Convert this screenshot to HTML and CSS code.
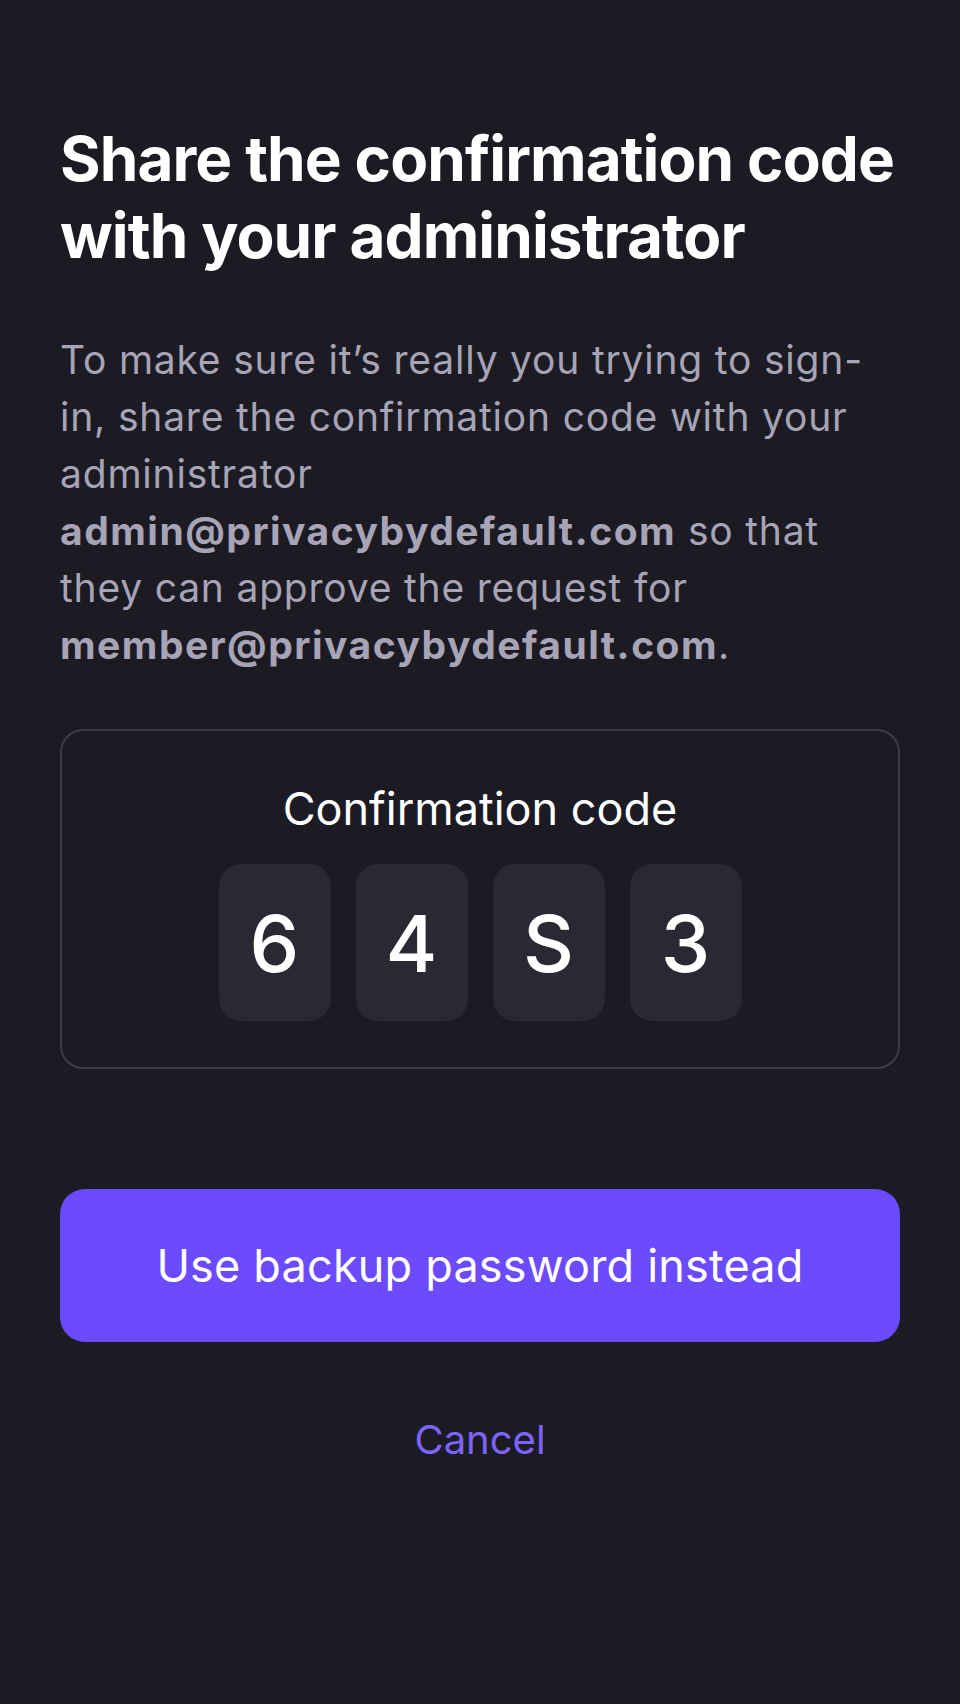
FILE: index.html
```html
<!DOCTYPE html>
<html lang="en">
<head>
<meta charset="utf-8">
<title>Share the confirmation code</title>
<link rel="stylesheet" href="styles.css">
</head>
<body>
<main class="screen">
  <h1 class="title">Share the confirmation code with your administrator</h1>
  <p class="intro">To make sure it’s really you trying to sign-in, share the confirmation code with your administrator <strong>admin@privacybydefault.com</strong> so that they can approve the request for <strong>member@privacybydefault.com</strong>.</p>
  <section class="code-card">
    <div class="code-label">Confirmation code</div>
    <div class="code-row">
      <span class="code-char">6</span>
      <span class="code-char">4</span>
      <span class="code-char">S</span>
      <span class="code-char">3</span>
    </div>
  </section>
  <button class="primary-btn" type="button">Use backup password instead</button>
  <button class="link-btn" type="button">Cancel</button>
</main>
</body>
</html>
```
FILE: styles.css
```css
* { box-sizing: border-box; }
html, body {
  margin: 0;
  padding: 0;
  background: #1c1b24;
}
body {
  font-family: Inter, "Noto Sans", "Liberation Sans", sans-serif;
  color: #ffffff;
  width: 960px;
  min-height: 1704px;
}
.screen {
  display: flex;
  flex-direction: column;
  padding: 120px 60px 0 60px;
}
.title {
  margin: 0;
  font-size: 62px;
  line-height: 77px;
  font-weight: 700;
  letter-spacing: -0.9px;
  color: #ffffff;
}
.intro {
  margin: 57px 0 0 0;
  font-size: 39px;
  line-height: 57px;
  font-weight: 400;
  color: #a7a4b6;
  letter-spacing: 0.8px;
}
.intro strong {
  font-weight: 700;
  letter-spacing: 1.5px;
}
.code-card {
  margin-top: 56px;
  border: 2px solid #3d3c49;
  border-radius: 23px;
  padding: 51px 0 46px 0;
  display: flex;
  flex-direction: column;
  align-items: center;
}
.code-label {
  font-size: 45px;
  line-height: 54px;
  font-weight: 400;
  color: #ffffff;
  letter-spacing: 0;
}
.code-row {
  margin-top: 28px;
  display: flex;
  gap: 25px;
}
.code-char {
  width: 112px;
  height: 157px;
  border-radius: 22px;
  background: #292833;
  display: flex;
  align-items: center;
  justify-content: center;
  font-size: 79px;
  font-weight: 500;
  color: #ffffff;
}
.primary-btn {
  margin-top: 120px;
  height: 153px;
  border: none;
  border-radius: 25px;
  background: #6c4bfe;
  color: #ffffff;
  font-family: inherit;
  font-size: 45px;
  font-weight: 400;
  letter-spacing: 0.2px;
  padding: 0;
}
.link-btn {
  margin-top: 68px;
  align-self: center;
  height: 60px;
  line-height: 60px;
  border: none;
  background: transparent;
  color: #7d63fb;
  font-family: inherit;
  font-size: 40px;
  font-weight: 400;
  padding: 0;
}
```
